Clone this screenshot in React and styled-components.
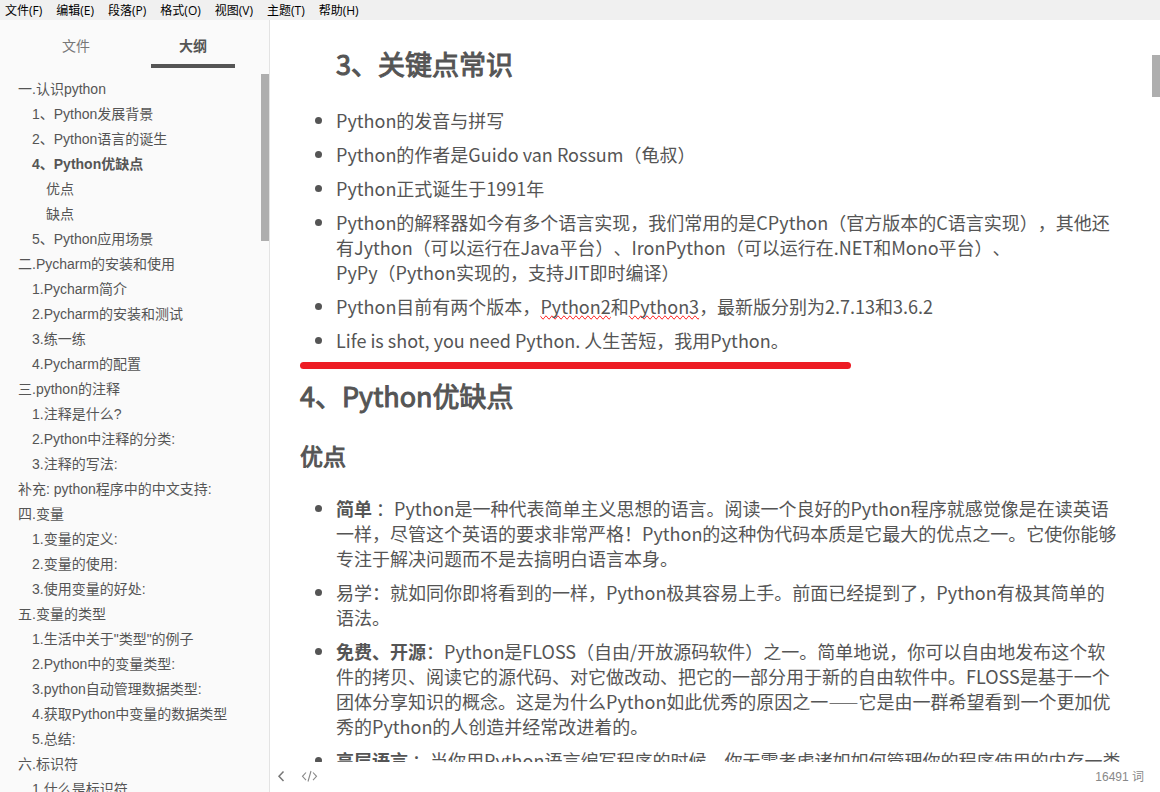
import React from "react";
import styled, { createGlobalStyle, css } from "styled-components";

const GlobalStyle = createGlobalStyle`
  *, *::before, *::after { box-sizing: border-box; }
  body { margin: 0; background: #ffffff; color: #555555; text-spacing-trim: space-all; }
  button { border: 0; background: none; padding: 0; margin: 0; font: inherit; color: inherit; cursor: pointer; }
`;

const uiFont = `"Liberation Sans", "Noto Sans CJK SC", sans-serif`;

const Window = styled.div`
  display: flex;
  flex-direction: column;
  height: 100vh;
  overflow: hidden;
`;

const MenuBar = styled.nav`
  flex: none;
  display: flex;
  gap: 14px;
  height: 20px;
  padding: 0 5px;
  background: #f0f0f0;
`;

const MenuButton = styled.button`
  padding-top: 2px;
  font: 12px/18px "Open Sans", "Noto Sans CJK SC", sans-serif;
  color: #000000;
`;

const Workspace = styled.div`
  flex: 1;
  min-height: 0;
  display: flex;
`;

const Sidebar = styled.aside`
  flex: none;
  display: flex;
  flex-direction: column;
  width: 270px;
  background: #fafafa;
  border-right: 1px solid #e3e3e3;
  font: 14px/25px ${uiFont};
`;

const Tabs = styled.div`
  flex: none;
  display: flex;
  justify-content: center;
  gap: 33px;
  height: 48px;
`;

const Tab = styled.button`
  width: 84px;
  padding-top: 8px;
  border-bottom: 4px solid transparent;
  color: #777777;
  ${(p) =>
    p.$active &&
    css`
      border-color: #555555;
      color: #555555;
      font-weight: 700;
    `}
`;

const OutlinePane = styled.div`
  flex: 1;
  min-height: 0;
  display: flex;
`;

const OutlineList = styled.ul`
  flex: 1;
  margin: 0;
  padding: 9px 0 0 18px;
  overflow: hidden;
  list-style: none;
`;

const OutlineItem = styled.li`
  padding-left: ${(p) => p.$level * 14}px;
  font-weight: ${(p) => (p.$active ? 700 : 400)};
  white-space: nowrap;
`;

const OutlineLink = styled.a`
  color: inherit;
  text-decoration: none;
`;

const Track = styled.div`
  flex: none;
  width: 8px;
  padding-top: ${(p) => p.$offset}px;
`;

const Thumb = styled.div`
  height: ${(p) => p.$length}px;
  background: #aeaeae;
`;

const Editor = styled.section`
  flex: 1;
  min-width: 0;
  display: flex;
  flex-direction: column;
`;

const Viewport = styled.div`
  flex: 1;
  min-height: 0;
  display: flex;
`;

const Article = styled.main`
  flex: 1;
  min-width: 0;
  overflow: hidden;
  padding: 26px 30px 0;
  font: 18px/25px "Noto Sans CJK SC", sans-serif;
`;

const Heading = styled.h2`
  margin: 0 0 26px;
  padding-left: ${(p) => (p.$indented ? 36 : 0)}px;
  font-size: 27px;
  line-height: 36px;
  font-weight: 400;
  -webkit-text-stroke: 1px currentColor;
`;

const SubHeading = styled.h3`
  margin: 0 0 26px;
  font-size: 23px;
  line-height: 30px;
  font-weight: 400;
  -webkit-text-stroke: 1px currentColor;
`;

const Bullets = styled.ul`
  display: flex;
  flex-direction: column;
  gap: 9px;
  margin: 0;
  padding: 0 0 0 36px;
`;

const Misspelled = styled.span`
  text-decoration-line: spelling-error;
`;

const NoBreak = styled.span`
  white-space: nowrap;
`;

const Dash = styled.span`
  font-size: 15px;
  line-height: 1;
`;

const RedRule = styled.hr`
  width: 67%;
  height: 7px;
  margin: 9px 0;
  border: 0;
  border-radius: 4px;
  background: #ed1c24;
`;

const StatusBar = styled.footer`
  flex: none;
  display: flex;
  align-items: center;
  height: 30px;
  padding: 0 16px 0 6px;
  gap: 12px;
  color: #888888;
`;

const IconButton = styled.button`
  display: flex;
`;

const WordCount = styled.button`
  margin-left: auto;
  font: 12px/20px ${uiFont};
`;

const menus = ["文件(F)", "编辑(E)", "段落(P)", "格式(O)", "视图(V)", "主题(T)", "帮助(H)"];

const outline = [
  [0, "一.认识python"],
  [1, "1、Python发展背景"],
  [1, "2、Python语言的诞生"],
  [1, "4、Python优缺点", true],
  [2, "优点"],
  [2, "缺点"],
  [1, "5、Python应用场景"],
  [0, "二.Pycharm的安装和使用"],
  [1, "1.Pycharm简介"],
  [1, "2.Pycharm的安装和测试"],
  [1, "3.练一练"],
  [1, "4.Pycharm的配置"],
  [0, "三.python的注释"],
  [1, "1.注释是什么?"],
  [1, "2.Python中注释的分类:"],
  [1, "3.注释的写法:"],
  [0, "补充: python程序中的中文支持:"],
  [0, "四.变量"],
  [1, "1.变量的定义:"],
  [1, "2.变量的使用:"],
  [1, "3.使用变量的好处:"],
  [0, "五.变量的类型"],
  [1, "1.生活中关于\"类型\"的例子"],
  [1, "2.Python中的变量类型:"],
  [1, "3.python自动管理数据类型:"],
  [1, "4.获取Python中变量的数据类型"],
  [1, "5.总结:"],
  [0, "六.标识符"],
  [1, "1.什么是标识符"],
];

export default function App() {
  return (
    <Window lang="zh-CN">
      <GlobalStyle />
      <MenuBar>
        {menus.map((m) => (
          <MenuButton key={m}>{m}</MenuButton>
        ))}
      </MenuBar>
      <Workspace>
        <Sidebar>
          <Tabs>
            <Tab>文件</Tab>
            <Tab $active>大纲</Tab>
          </Tabs>
          <OutlinePane>
            <OutlineList>
              {outline.map(([level, text, active]) => (
                <OutlineItem key={text} $level={level} $active={active}>
                  <OutlineLink href="#">{text}</OutlineLink>
                </OutlineItem>
              ))}
            </OutlineList>
            <Track $offset={6}>
              <Thumb $length={167} />
            </Track>
          </OutlinePane>
        </Sidebar>
        <Editor>
          <Viewport>
            <Article>
              <Heading $indented>3、关键点常识</Heading>
              <Bullets>
                <li>Python的发音与拼写</li>
                <li>Python的作者是Guido van Rossum（龟叔）</li>
                <li>Python正式诞生于1991年</li>
                <li>
                  Python的解释器如今有多个语言实现，我们常用的是CPython（官方版本的C语言实现），其他还有Jython（可以运行在Java平台）、IronPython（可以运行在.NET和Mono平台）、<NoBreak>PyPy（Python</NoBreak>实现的，支持JIT即时编译）
                </li>
                <li>
                  Python目前有两个版本，<Misspelled>Python2</Misspelled>和<Misspelled>Python3</Misspelled>，最新版分别为2.7.13和3.6.2
                </li>
                <li>Life is shot, you need Python. 人生苦短，我用Python。</li>
              </Bullets>
              <RedRule />
              <Heading>4、Python优缺点</Heading>
              <SubHeading>优点</SubHeading>
              <Bullets>
                <li>
                  <strong>简单</strong> ：Python是一种代表简单主义思想的语言。阅读一个良好的Python程序就感觉像是在读英语一样，尽管这个英语的要求非常严格！Python的这种伪代码本质是它最大的优点之一。它使你能够专注于解决问题而不是去搞明白语言本身。
                </li>
                <li>易学：就如同你即将看到的一样，Python极其容易上手。前面已经提到了，Python有极其简单的语法。</li>
                <li>
                  <strong>免费、开源</strong>：Python是FLOSS（自由/开放源码软件）之一。简单地说，你可以自由地发布这个软件的拷贝、阅读它的源代码、对它做改动、把它的一部分用于新的自由软件中。FLOSS是基于一个团体分享知识的概念。这是为什么Python如此优秀的原因之一<Dash>——</Dash>它是由一群希望看到一个更加优秀的Python的人创造并经常改进着的。
                </li>
                <li>
                  <strong>高层语言</strong> ：当你用Python语言编写程序的时候，你无需考虑诸如如何管理你的程序使用的内存一类的底层细节。
                </li>
              </Bullets>
            </Article>
            <Track $offset={35}>
              <Thumb $length={42} />
            </Track>
          </Viewport>
          <StatusBar>
            <IconButton aria-label="Toggle sidebar">
              <svg width="11" height="16" viewBox="0 0 11 16" fill="none" stroke="#777777" strokeWidth="1.5">
                <path d="M7.5 2.5 L3 7.2 L7.5 11.9" />
              </svg>
            </IconButton>
            <IconButton aria-label="Source mode">
              <svg width="20" height="16" viewBox="0 0 20 16" fill="none" stroke="#888888" strokeWidth="1.1">
                <path d="M7 3.5 L3.5 7.3 L7 11.1 M14 3.5 L17.5 7.3 L14 11.1 M12 2 L9 12.5" />
              </svg>
            </IconButton>
            <WordCount>16491 词</WordCount>
          </StatusBar>
        </Editor>
      </Workspace>
    </Window>
  );
}
